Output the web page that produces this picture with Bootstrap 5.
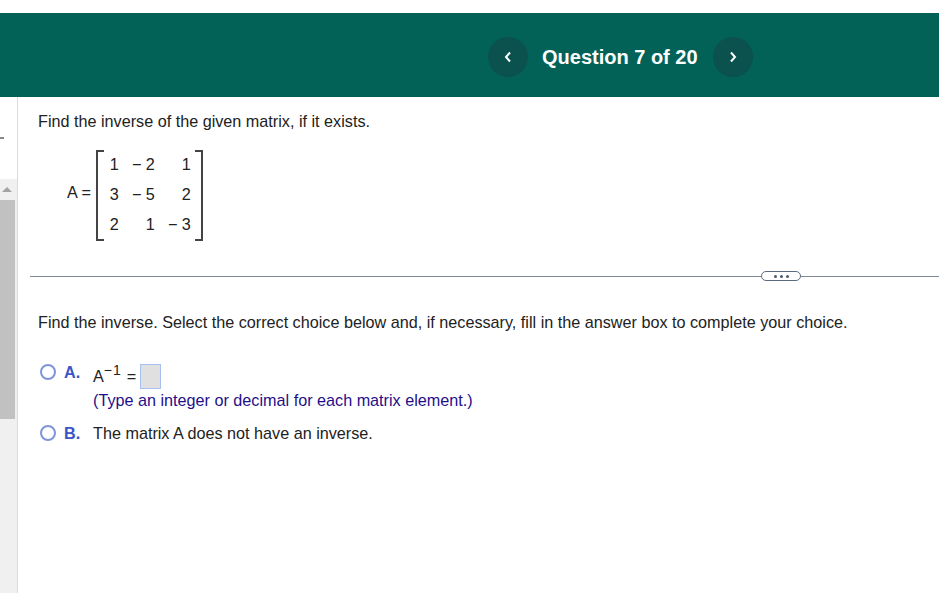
<!DOCTYPE html>
<html>
  <head>
    <title>Question 7 of 20</title>
    <link href="https://cdn.jsdelivr.net/npm/bootstrap@5.3.2/dist/css/bootstrap.min.css" rel="stylesheet">
    <style>
      html, body { height: 100%; }
      body { font-family: "Liberation Sans", Arial, sans-serif; font-size: 16.2px; line-height: 20px; color: #222; overflow: hidden; display: flex; flex-direction: column; }
      .top-gap { height: 13px; flex: none; }
      .quiz-bar { height: 84px; flex: none; background: #026258; color: #fff; padding: 4px 0 0 488px; }
      .nav-round { width: 40px; height: 40px; padding: 0; border: 0; border-radius: 50%; background: #0b514e; }
      .nav-round:hover { background: #0b514e; }
      .nav-round svg { display: block; margin: auto; }
      .quiz-title { font-size: 20px; font-weight: 700; line-height: 24px; margin: 0 15px 0 14px; }
      .page-body { flex: 1; min-height: 0; }
      .side-rail { width: 18px; flex: none; border-right: 1px solid #dcdcdc; }
      .rail-top { height: 82px; flex: none; padding-top: 40px; }
      .rail-dash { width: 4px; height: 2px; background: #888; }
      .rail-track { flex: 1; background: #f0f0f0; }
      .rail-arrow { height: 21px; padding: 8px 0 0 2px; }
      .rail-arrow svg { display: block; }
      .rail-thumb { height: 219px; width: 15px; background: #c1c1c1; }
      .main-pane { flex: 1; min-width: 0; padding-top: 14px; }
      .text-pad { padding-left: 20px; }
      .matrix-row { padding: 19px 0 0 49px; height: 123px; }
      .matrix-name { margin: 32px 5px 0 0; }
      .matrix-box { width: 107px; height: 91px; border-left: 2px solid #444; border-right: 2px solid #444; position: relative; display: grid; grid-template-columns: 21px 36px 36px; grid-auto-rows: 30px; text-align: right; }
      .matrix-box::before, .matrix-box::after { content: ""; position: absolute; top: 0; width: 6px; height: 91px; border-top: 2px solid #444; border-bottom: 2px solid #444; }
      .matrix-box::before { left: 0; }
      .matrix-box::after { right: 0; }
      .matrix-cell { line-height: 30px; margin-top: -1px; }
      .rule-line { height: 1px; background: #7f8a99; flex: 1; }
      .rule-start { flex: none; width: 731px; }
      .rule-wrap { margin: 17px 0 0 12px; height: 10px; }
      .more-pill { width: 40px; height: 10px; flex: none; border: 1px solid #5b6b7f; border-radius: 5px; gap: 3px; }
      .more-pill i { width: 3px; height: 3px; border-radius: 50%; background: #4c5a6c; display: block; }
      .ask-line { margin-top: 31px; }
      .choice-row { padding-left: 22px; }
      .choice-first { margin-top: 30px; }
      .choice-next { margin-top: 13px; }
      .radio-ring { width: 16px; height: 16px; border: 2px solid #7f95d8; border-radius: 50%; flex: none; margin-top: 2px; }
      .choice-letter { width: 29px; margin-left: 8px; font-weight: 700; color: #3a55c4; flex: none; }
      .formula-line { height: 28px; }
      .formula-text { margin-top: 4px; }
      .power-top { font-size: 14px; position: relative; top: -7px; margin-right: 6px; }
      .power-minus { margin-right: 1px; }
      .answer-box { width: 21px; height: 25px; background: #e0e0e0; border: 1px solid #a5c0ee; margin: 2px 0 0 4px; }
      .hint-line { color: #1f0f8a; }
    </style>
    <script src="https://cdn.jsdelivr.net/npm/bootstrap@5.3.2/dist/js/bootstrap.bundle.min.js"></script>
  </head>
  <body>
    <div class="top-gap"></div>
    <header class="quiz-bar d-flex align-items-center">
      <button class="btn nav-round" type="button" aria-label="Previous question">
        <svg width="8" height="12" viewBox="0 0 8 12"><path d="M6 1.5 L2 6 L6 10.5" fill="none" stroke="#fff" stroke-width="2"/></svg>
      </button>
      <h1 class="quiz-title">Question 7 of 20</h1>
      <button class="btn nav-round" type="button" aria-label="Next question">
        <svg width="8" height="12" viewBox="0 0 8 12"><path d="M2 1.5 L6 6 L2 10.5" fill="none" stroke="#fff" stroke-width="2"/></svg>
      </button>
    </header>

    <div class="page-body d-flex">
      <div class="side-rail d-flex flex-column">
        <div class="rail-top"><div class="rail-dash"></div></div>
        <div class="rail-track">
          <div class="rail-arrow">
            <svg width="10" height="5" viewBox="0 0 10 5"><path d="M5 0 L10 5 L0 5 Z" fill="#a3a3a3"/></svg>
          </div>
          <div class="rail-thumb"></div>
        </div>
      </div>

      <main class="main-pane">
        <div class="text-pad">Find the inverse of the given matrix, if it exists.</div>

        <div class="matrix-row d-flex align-items-start">
          <span class="matrix-name">A =</span>
          <div class="matrix-box" id="matrix"></div>
        </div>

        <div class="rule-wrap d-flex align-items-center">
          <div class="rule-line rule-start"></div>
          <div class="more-pill d-flex align-items-center justify-content-center"><i></i><i></i><i></i></div>
          <div class="rule-line"></div>
        </div>

        <div class="text-pad ask-line">Find the inverse. Select the correct choice below and, if necessary, fill in the answer box to complete your choice.</div>

        <div class="choice-row choice-first d-flex">
          <span class="radio-ring"></span>
          <span class="choice-letter">A.</span>
          <div>
            <div class="formula-line d-flex align-items-start">
              <span class="formula-text">A<span class="power-top"><span class="power-minus">&minus;</span>1</span>=</span>
              <span class="answer-box"></span>
            </div>
            <div class="hint-line">(Type an integer or decimal for each matrix element.)</div>
          </div>
        </div>

        <div class="choice-row choice-next d-flex">
          <span class="radio-ring"></span>
          <span class="choice-letter">B.</span>
          <div>The matrix A does not have an inverse.</div>
        </div>
      </main>
    </div>

    <script>
      // fill the matrix cells
      let values = ["1", "− 2", "1", "3", "− 5", "2", "2", "1", "− 3"];
      let matrixElement = document.getElementById('matrix');
      for (let i = 0; i < values.length; i++)
      {
        const cell = document.createElement('div');
        cell.className = `matrix-cell`;
        cell.textContent = values[i];
        matrixElement.appendChild(cell);
      };
    </script>
  </body>
</html>
